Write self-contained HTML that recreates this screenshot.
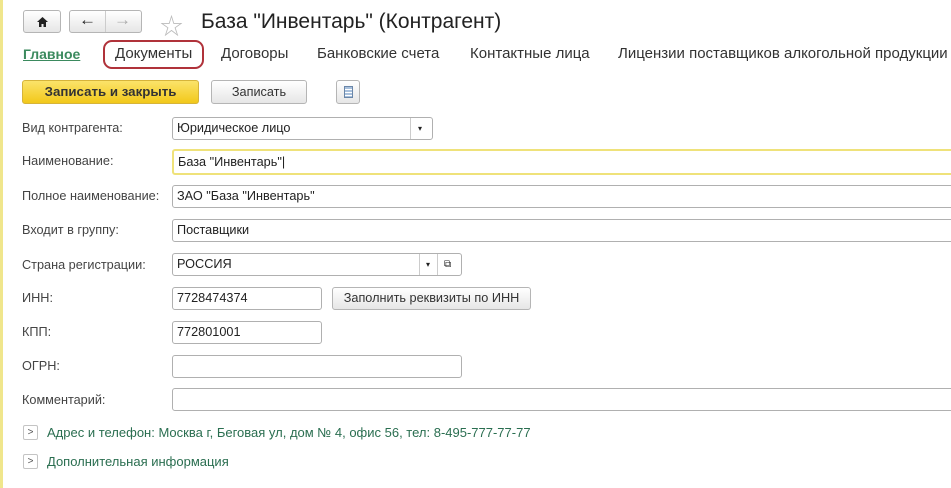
<!DOCTYPE html>
<html><head><meta charset="utf-8"><style>
*{box-sizing:border-box;margin:0;padding:0}
body{width:951px;height:488px;background:#fff;font-family:"Liberation Sans","Noto Sans CJK SC",sans-serif;font-size:12.7px;color:#333;position:relative;overflow:hidden}
.a{position:absolute}
.btn{position:absolute;border:1px solid #b5b5b5;border-radius:3px;background:linear-gradient(#fff,#e6e6e6);text-align:center;color:#333}
.lbl{position:absolute;left:22px;color:#444;font-size:12.7px}
.f{position:absolute;left:172px;height:23px;border:1px solid #b0b0b0;border-radius:3px;background:#fff;padding-left:4px;line-height:21px;color:#222;font-size:12.7px}
.tab{position:absolute;top:45px;font-size:15px;color:#333}
.exp{position:absolute;left:23px;width:15px;height:15px;border:1px solid #c4c4c4;border-radius:2px;font-size:10px;line-height:13px;text-align:center;color:#555}
.el{position:absolute;left:47px;color:#2a6e50;font-size:13px}
</style></head><body>
<div class="a" style="left:0;top:0;width:3px;height:488px;background:#f0e68c"></div>
<div class="btn" style="left:23px;top:10px;width:38px;height:23px"><svg class="a" style="left:12px;top:5px" width="13" height="12" viewBox="0 0 13 12"><path d="M6.5 1 L12 6 H10 V11 H7.5 V8 H5.5 V11 H3 V6 H1 Z" fill="#222"/></svg></div>
<div class="btn" style="left:69px;top:10px;width:73px;height:23px"></div>
<div class="a" style="left:105px;top:11px;width:1px;height:21px;background:#ccc"></div>
<div class="a" style="left:79px;top:10px;font-size:17px;font-weight:bold;color:#222">&#8592;</div>
<div class="a" style="left:114px;top:10px;font-size:17px;color:#aaa">&#8594;</div>
<div class="a" style="left:160px;top:7px;font-size:23px;color:#bbb">&#9734;</div>
<div class="a" style="left:201px;top:10px;font-size:21px;color:#222">База "Инвентарь" (Контрагент)</div>
<div class="tab" style="left:23px;color:#3b8a5e;font-weight:bold;text-decoration:underline;font-size:14px;top:46px">Главное</div>
<div class="a" style="left:103px;top:40px;width:101px;height:29px;border:2px solid #b0323a;border-radius:9px"></div>
<div class="tab" style="left:115px">Документы</div>
<div class="tab" style="left:221px">Договоры</div>
<div class="tab" style="left:317px">Банковские счета</div>
<div class="tab" style="left:470px">Контактные лица</div>
<div class="tab" style="left:618px">Лицензии поставщиков алкогольной продукции</div>
<div class="btn" style="left:22px;top:80px;width:177px;height:24px;background:linear-gradient(#fbe36a,#f2c81a);border-color:#d6b43a;font-weight:bold;line-height:22px;color:#333;font-size:13.3px">Записать и закрыть</div>
<div class="btn" style="left:211px;top:80px;width:96px;height:24px;line-height:22px">Записать</div>
<div class="btn" style="left:336px;top:80px;width:24px;height:24px"><div class="a" style="left:7px;top:5px;width:9px;height:12px;border:1px solid #6a86a8;background:repeating-linear-gradient(#a8c0dc 0 2px,#fff 2px 3px)"></div></div>
<div class="lbl" style="top:121px">Вид контрагента:</div>
<div class="f" style="top:117px;width:261px">Юридическое лицо<span class="a" style="left:237px;top:0;width:1px;height:21px;background:#ccc"></span><span class="a" style="left:245px;top:0;font-size:8px">&#9662;</span></div>
<div class="lbl" style="top:154px">Наименование:</div>
<div class="f" style="top:149px;width:790px;height:26px;border:2px solid #efe27a;line-height:22px">База "Инвентарь"|</div>
<div class="lbl" style="top:189px">Полное наименование:</div>
<div class="f" style="top:185px;width:790px">ЗАО "База "Инвентарь"</div>
<div class="lbl" style="top:223px">Входит в группу:</div>
<div class="f" style="top:219px;width:790px">Поставщики</div>
<div class="lbl" style="top:258px">Страна регистрации:</div>
<div class="f" style="top:253px;width:290px">РОССИЯ<span class="a" style="left:246px;top:0;width:1px;height:21px;background:#ccc"></span><span class="a" style="left:253px;top:0;font-size:8px">&#9662;</span><span class="a" style="left:264px;top:0;width:1px;height:21px;background:#ccc"></span><span class="a" style="left:271px;top:0;font-size:10px">&#10697;</span></div>
<div class="lbl" style="top:291px">ИНН:</div>
<div class="f" style="top:287px;width:150px">7728474374</div>
<div class="btn" style="left:332px;top:287px;width:199px;height:23px;line-height:21px">Заполнить реквизиты по ИНН</div>
<div class="lbl" style="top:325px">КПП:</div>
<div class="f" style="top:321px;width:150px">772801001</div>
<div class="lbl" style="top:359px">ОГРН:</div>
<div class="f" style="top:355px;width:290px"></div>
<div class="lbl" style="top:393px">Комментарий:</div>
<div class="f" style="top:388px;width:790px"></div>
<div class="exp" style="top:425px">&gt;</div>
<div class="el" style="top:425px">Адрес и телефон: Москва г, Беговая ул, дом № 4, офис 56, тел: 8-495-777-77-77</div>
<div class="exp" style="top:454px">&gt;</div>
<div class="el" style="top:454px">Дополнительная информация</div>
</body></html>
